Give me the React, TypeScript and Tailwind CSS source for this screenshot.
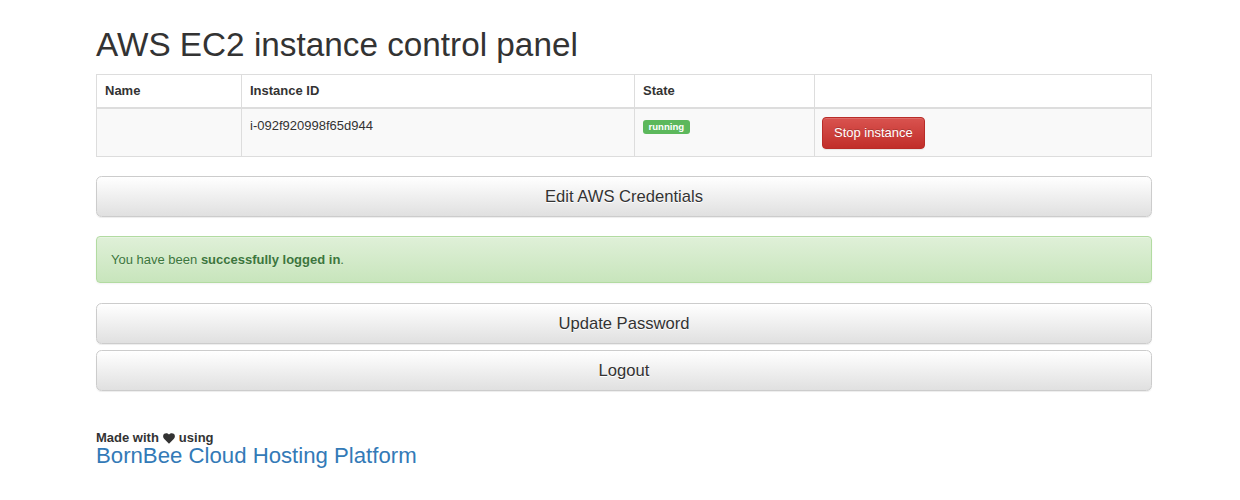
import React from "react";

function GrayButton({ children }: { children: React.ReactNode }) {
  return (
    <button
      type="button"
      className="block w-full rounded-[5.5px] border border-[#cccccc] bg-[linear-gradient(to_bottom,#ffffff_0%,#e0e0e0_100%)] py-[9px] text-center text-[16.6px] leading-[21px] text-[#333333] shadow-[inset_0_1px_0_rgba(255,255,255,0.15),0_1px_1px_rgba(0,0,0,0.075)] [text-shadow:0_1px_0_#fff]"
    >
      {children}
    </button>
  );
}

export default function App() {
  return (
    <div
      className="min-h-[500px] bg-white text-[13px] leading-[18px] text-[#333333]"
      style={{ fontFamily: '"Liberation Sans", Arial, Helvetica, sans-serif' }}
    >
      <div className="ml-[96px] w-[1056px] pt-[27px]">
        <h1 className="mb-[11px] text-[33.3px] font-normal leading-[36px] text-[#333333]">
          AWS EC2 instance control panel
        </h1>

        <table className="w-full table-fixed border-collapse border border-[#dddddd]">
          <colgroup>
            <col className="w-[145px]" />
            <col className="w-[393px]" />
            <col className="w-[180px]" />
            <col />
          </colgroup>
          <thead>
            <tr className="bg-white">
              <th className="border border-b-2 border-[#dddddd] px-[8px] py-[7px] text-left align-bottom font-bold leading-[18px]">
                Name
              </th>
              <th className="border border-b-2 border-[#dddddd] px-[8px] py-[7px] text-left align-bottom font-bold leading-[18px]">
                Instance ID
              </th>
              <th className="border border-b-2 border-[#dddddd] px-[8px] py-[7px] text-left align-bottom font-bold leading-[18px]">
                State
              </th>
              <th className="border border-b-2 border-[#dddddd] px-[8px] py-[7px] text-left align-bottom font-bold leading-[18px]"></th>
            </tr>
          </thead>
          <tbody>
            <tr className="bg-[#f9f9f9]">
              <td className="border border-[#dddddd] px-[8px] pt-[8px] pb-[7px] align-top"></td>
              <td className="border border-[#dddddd] px-[8px] pt-[8px] pb-[7px] align-top leading-[18px]">
                i-092f920998f65d944
              </td>
              <td className="border border-[#dddddd] px-[8px] pt-[8px] pb-[7px] align-top">
                <span className="mt-[3px] inline-block h-[14px] rounded-[3px] bg-[#5cb85c] px-[5.5px] align-top text-[9.6px] font-bold leading-[14px] text-white">
                  running
                </span>
              </td>
              <td className="border border-[#dddddd] px-[7px] pt-[8px] pb-[7px] align-top">
                <button
                  type="button"
                  className="rounded-[4px] border border-[#b92c28] bg-[linear-gradient(to_bottom,#d9534f_0%,#c12e2a_100%)] px-[11px] py-[6px] text-[13px] leading-[18px] text-white shadow-[inset_0_1px_0_rgba(255,255,255,0.15),0_1px_1px_rgba(0,0,0,0.075)] [text-shadow:0_-1px_0_rgba(0,0,0,0.2)]"
                >
                  Stop instance
                </button>
              </td>
            </tr>
          </tbody>
        </table>

        <div className="mt-[19px]">
          <GrayButton>Edit AWS Credentials</GrayButton>
        </div>

        <div className="mt-[19px] rounded-[4px] border border-[#b2dba1] bg-[linear-gradient(to_bottom,#dff0d8_0%,#c8e5bc_100%)] px-[14px] py-[14px] leading-[17px] text-[#3c763d] shadow-[inset_0_1px_0_rgba(255,255,255,0.25),0_1px_2px_rgba(0,0,0,0.05)] [text-shadow:0_1px_0_rgba(255,255,255,0.2)]">
          You have been <strong className="font-bold">successfully logged in</strong>.
        </div>

        <div className="mt-[20px] flex flex-col gap-[6px]">
          <GrayButton>Update Password</GrayButton>
          <GrayButton>Logout</GrayButton>
        </div>

        <div className="mt-[40px]">
          <div className="flex items-center text-[13px] font-bold leading-[14px] text-[#333333]">
            <span>Made with</span>
            <svg
              className="mx-[4px] h-[11px] w-[12px]"
              viewBox="0 0 24 22"
              fill="#333333"
              aria-hidden="true"
            >
              <path d="M12 21.5 L2.6 12.2 C-0.6 9 -0.6 4 2.5 1.6 C5.3 -0.6 9.4 0 12 3.2 C14.6 0 18.7 -0.6 21.5 1.6 C24.6 4 24.6 9 21.4 12.2 Z" />
            </svg>
            <span>using</span>
          </div>
          <a href="#" className="block text-[22.2px] leading-[22px] text-[#337ab7] no-underline">
            BornBee Cloud Hosting Platform
          </a>
        </div>
      </div>
    </div>
  );
}
